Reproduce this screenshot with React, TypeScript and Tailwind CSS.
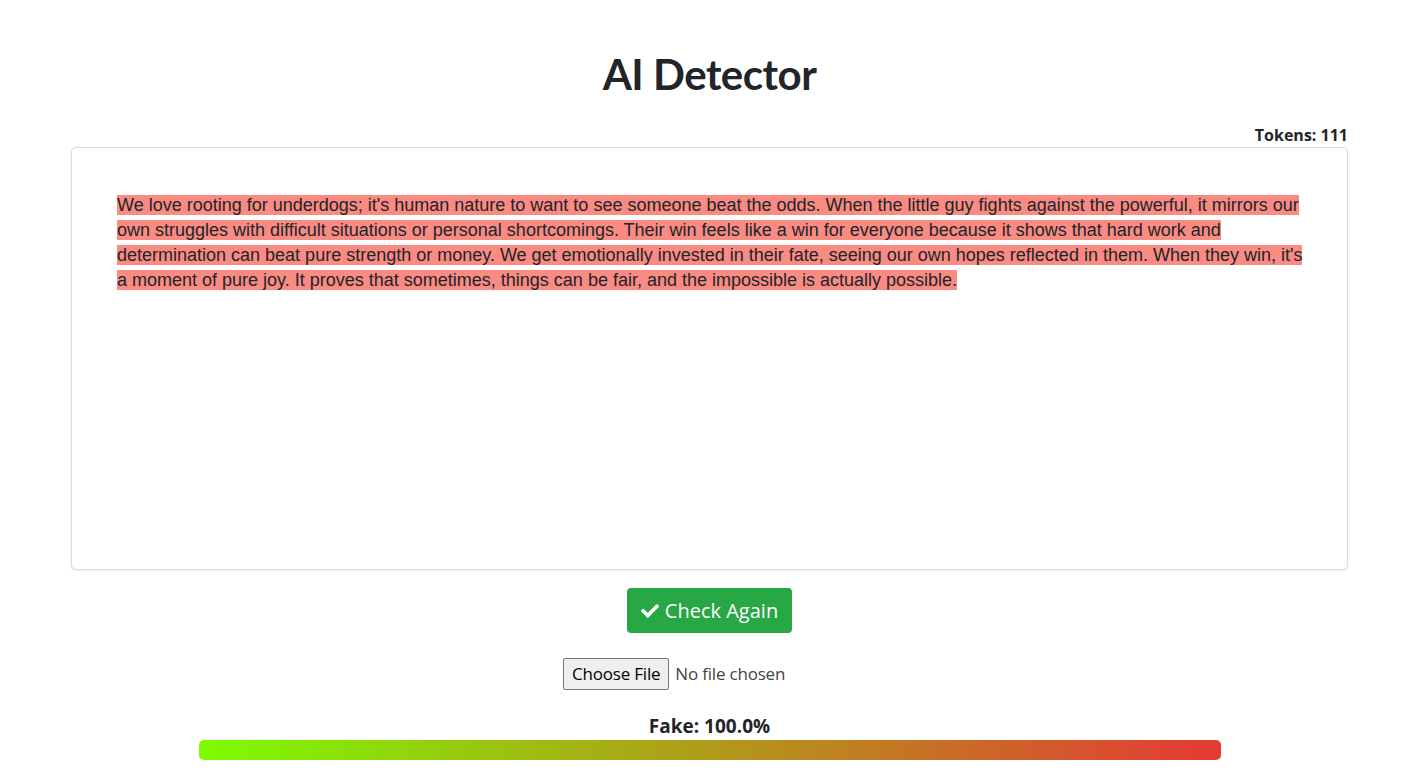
import { FaCheck } from "react-icons/fa";

const TEXT =
  "We love rooting for underdogs; it's human nature to want to see someone beat the odds. When the little guy fights against the powerful, it mirrors our own struggles with difficult situations or personal shortcomings. Their win feels like a win for everyone because it shows that hard work and determination can beat pure strength or money. We get emotionally invested in their fate, seeing our own hopes reflected in them. When they win, it's a moment of pure joy. It proves that sometimes, things can be fair, and the impossible is actually possible.";

export default function App() {
  return (
    <div className="min-h-screen w-[1419px] bg-white font-['Open_Sans',sans-serif] text-[#212529]">
      <div className="flex flex-col items-center pt-[46px]">
        <h1 className="font-['Lato',sans-serif] text-[42px] font-bold leading-[56px] tracking-[-0.5px]">
          AI Detector
        </h1>

        <div className="mt-[22px] flex w-[1277px] flex-col">
          <div className="self-end text-base font-bold leading-[22px]">Tokens: 111</div>
          <div className="mt-[1px] h-[423px] rounded-[5px] border border-[#dcdcdc] bg-white pl-[45px] pr-[42px] pt-[45px] shadow-[0_1px_3px_rgba(0,0,0,0.08)]">
            <p className="font-['Liberation_Sans',Arial,sans-serif] text-[18px] leading-[25px] text-[#212529]">
              <span className="bg-[#f98b83]">{TEXT}</span>
            </p>
          </div>
        </div>

        <button className="mt-[18px] flex h-[45px] w-[165px] items-center justify-center gap-[6px] rounded-[4px] bg-[#28a745] text-[20px] text-white">
          <FaCheck className="h-[18px] w-[18px]" />
          <span>Check Again</span>
        </button>

        <div className="mt-[25px] flex w-[293px] items-center text-[17px] tracking-[-0.2px]">
          <span className="rounded-[2px] border border-[#767676] bg-[#efefef] px-[8px] py-[1px] leading-[28px] text-black">
            Choose File
          </span>
          <span className="ml-[6px] leading-[28px] text-[#444]">No file chosen</span>
        </div>

        <div className="mt-[25px] text-[19px] font-bold leading-[22px]">Fake: 100.0%</div>
        <div className="mt-[3px] h-[20px] w-[1022px] rounded-[5px] bg-[linear-gradient(to_right,#7cfc00,#e53935)]" />
      </div>
    </div>
  );
}
